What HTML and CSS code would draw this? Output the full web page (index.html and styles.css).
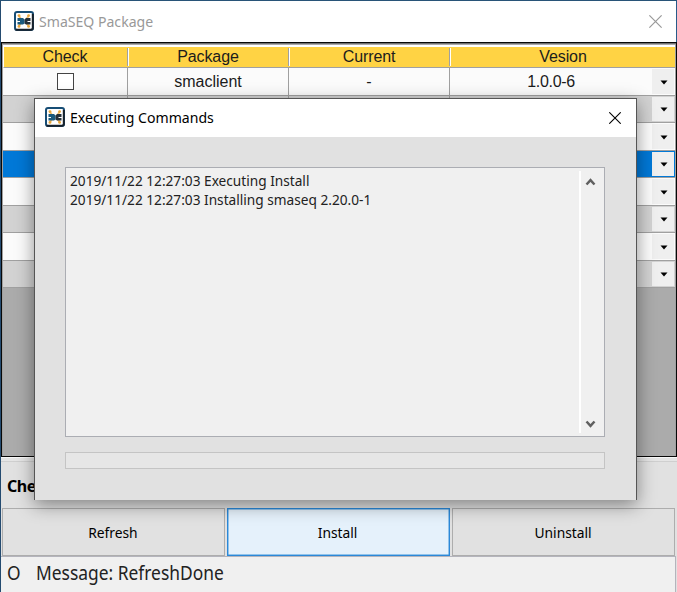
FILE: index.html
```html
<!DOCTYPE html>
<html lang="en">
<head>
<meta charset="utf-8">
<title>SmaSEQ Package</title>
<link rel="stylesheet" href="styles.css">
</head>
<body>
<svg class="defs" aria-hidden="true">
  <symbol id="logo" viewBox="0 0 20 20">
    <rect x="1" y="1" width="18" height="18" rx="2" fill="#fff" stroke="#174d75" stroke-width="2"/>
    <path d="M1.5 18.8H17a1.8 1.8 0 0 0 1.8-1.8V3" fill="none" stroke="#18212a" stroke-width="2"/>
    <path d="M5 5l2 3M14.5 5l-2 3M5 15l2-3M14.5 15l-2-3" stroke="#f0bd6a" stroke-width="2"/>
    <circle cx="5" cy="4.6" r="1.4" fill="#e9a63a"/><circle cx="14.6" cy="4.6" r="1.4" fill="#e9a63a"/>
    <circle cx="5" cy="15.4" r="1.4" fill="#e9a63a"/><circle cx="14.6" cy="15.4" r="1.4" fill="#e9a63a"/>
    <path d="M3.5 7H9l1.500 1.500v4L9 13.500H3.500v-2.500H6v-1H3.500z" fill="#1b5a7d"/>
    <path d="M16.500 7H12l-1.500 1.500v4l1.500 1H16.500V11H13.500v-1h3z" fill="#26313a"/>
  </symbol>
  <symbol id="close" viewBox="0 0 12 12"><path d="M.3.3l11.4 11.4M11.7.3L.3 11.7" fill="none" stroke="currentColor" stroke-width="1.1"/></symbol>
  <symbol id="arrow" viewBox="0 0 8 5"><path d="M.5.5h7L4 4.5z" fill="#000"/></symbol>
  <symbol id="chevron" viewBox="0 0 10 8"><path d="M1 6.5l4-4.3 4 4.3" fill="none" stroke="#606060" stroke-width="2.5"/></symbol>
</svg>
<div class="window">
  <header class="titlebar">
    <svg class="logo"><use href="#logo"/></svg>
    <h1 class="title">SmaSEQ Package</h1>
    <svg class="close"><use href="#close"/></svg>
  </header>
  <main class="grid">
    <div class="row head"><div>Check</div><div>Package</div><div>Current</div><div>Vesion</div></div>
    <div class="row"><div><i class="checkbox"></i></div><div>smaclient</div><div>-</div><div class="version">1.0.0-6</div><b class="drop"><svg><use href="#arrow"/></svg></b></div>
    <div class="row alt"><div></div><div></div><div></div><div></div><b class="drop"><svg><use href="#arrow"/></svg></b></div>
    <div class="row"><div></div><div></div><div></div><div></div><b class="drop"><svg><use href="#arrow"/></svg></b></div>
    <div class="row selected"><div></div><div></div><div></div><div></div><b class="drop"><svg><use href="#arrow"/></svg></b></div>
    <div class="row"><div></div><div></div><div></div><div></div><b class="drop"><svg><use href="#arrow"/></svg></b></div>
    <div class="row alt"><div></div><div></div><div></div><div></div><b class="drop"><svg><use href="#arrow"/></svg></b></div>
    <div class="row"><div></div><div></div><div></div><div></div><b class="drop"><svg><use href="#arrow"/></svg></b></div>
    <div class="row alt"><div></div><div></div><div></div><div></div><b class="drop"><svg><use href="#arrow"/></svg></b></div>
  </main>
  <div class="check-label">Che</div>
  <div class="actions">
    <button><span>Refresh</span></button>
    <button class="active"><span>Install</span></button>
    <button><span>Uninstall</span></button>
  </div>
  <footer class="status"><span class="state">O</span><span class="message">Message: RefreshDone</span></footer>
</div>
<section class="dialog">
  <header class="dialog-title">
    <svg class="logo"><use href="#logo"/></svg>
    <h2 class="title">Executing Commands</h2>
    <svg class="close"><use href="#close"/></svg>
  </header>
  <div class="dialog-body">
    <div class="log">
      <div class="lines"><p>2019/11/22 12:27:03 Executing Install</p><p>2019/11/22 12:27:03 Installing smaseq 2.20.0-1</p></div>
      <div class="scroll"><svg><use href="#chevron"/></svg><svg class="down"><use href="#chevron"/></svg></div>
    </div>
    <div class="progress"></div>
  </div>
</section>
</body>
</html>
```
FILE: styles.css
```css
* { box-sizing: border-box; }
body { margin: 0; width: 677px; height: 592px; overflow: hidden; position: relative; font-family: "Noto Sans", sans-serif; color: #000; }
h1, h2, p { margin: 0; font-weight: 400; }
svg { display: block; }
.defs { display: none; }
.window { height: 592px; display: flex; flex-direction: column; background: #e1e1e1; border-left: 1px solid #244b70; border-top: 1px solid #285478; }
.titlebar { height: 41px; flex: none; display: flex; align-items: center; padding: 0 16px 0 13px; background: #fff; color: #999; border-right: 1px solid #285b8a; }
.titlebar .logo { margin-top: -1px; }
.logo { width: 20px; height: 20px; margin-right: 5px; flex: none; }
.title { font-size: 15px; line-height: 22px; white-space: nowrap; transform-origin: left; transform: scaleX(.938); margin-top: -2px; }
.close { width: 12px; height: 12px; margin-left: auto; flex: none; }
.titlebar .close { width: 13px; height: 13px; margin-right: -2px; margin-top: -1px; }

.grid { height: 415px; flex: none; background: #ababab; border: 1px solid #080808; padding: 2px 1px 0; font: 16px "Liberation Sans", sans-serif; color: #1c1c1c; box-shadow: inset 0 1px #707070, inset 1px 0 #a0a0a0, inset -1px 0 #a0a0a0; }
.row { display: grid; grid-template-columns: 125px 161px 161px 1fr 24px; height: 27.5px; background: #fbfbfb; border-bottom: 1.5px solid #a0a0a0; }
.row > div { display: flex; align-items: center; justify-content: center; border-right: 1px solid #a0a0a0; padding-top: 2px; }
.row > div:nth-child(4) { border-right: 0; }
.row > div:first-child { padding-top: 0; }
.head { grid-template-columns: 125px 161px 161px 1fr; height: 23px; background: #ffd344; border-top: 2px solid #fff; border-left: 1px solid #fff; border-bottom: 1px solid #a0a0a0; letter-spacing: -.1px; }
.head > div, .head > div:first-child { padding-top: 0; }
.head > div:not(:last-child) { position: relative; left: -1px; box-shadow: 1px 0 #fff; margin-top: 1px; margin-bottom: 1px; }
.row .version { padding-left: 1px; letter-spacing: -.3px; }
.alt { background: #d2d2d2; }
.selected { background: #0078d7; }
.selected .drop { outline: 1px solid #0078d7; }
.drop { background: #efefef; margin: 1px; display: flex; align-items: center; justify-content: center; padding-left: 2px; }
.drop svg { width: 8px; height: 5px; margin-top: 2px; }
.checkbox { width: 17px; height: 17px; border: 1px solid #444; background: #fff; }

.check-label { height: 51px; flex: none; padding: 18px 6px 0; border-top: 1px solid #f8f8f8; box-shadow: inset 0 3px #e5e5e5, inset 0 4px #cfcfcf; font-size: 16px; line-height: 20px; font-weight: 700; letter-spacing: -.4px; }
.actions { display: grid; grid-template-columns: repeat(3, 223px); gap: 2px; height: 48px; flex: none; padding-left: 1px; }
button { font: 15px "Noto Sans", sans-serif; color: #000; border: 1px solid #adadad; background: #e1e1e1; padding: 0 1px 1px 0; }
button span { display: inline-block; transform: scaleX(.92); }
.active { background: #e5f1fb; border: 1px solid #2b88d8; box-shadow: inset 0 0 0 .5px #3e96dc; }
.status { flex: 1; display: flex; align-items: flex-start; padding: 3px 6px; background: #f0f0f0; border: 1px solid #b4b4bc; border-width: 1px 1px 0 0; margin-right: 1px; font-size: 19px; line-height: 26px; color: #222; }
.status span { transform: scaleX(.915); transform-origin: left; white-space: nowrap; }
.state { width: 29px; }

.dialog { position: absolute; left: 34px; top: 98px; width: 603px; height: 402px; border: 1px solid #555; border-bottom: 0; background: #e1e1e1; box-shadow: 0 5px 17px rgba(0,0,0,.42); }
.dialog-title { height: 38px; display: flex; align-items: center; background: #fff; padding: 0 15px 0 10px; }
.dialog-title .logo { margin-top: -2px; }
.dialog-body { padding: 30px 31px 0 30px; }
.log { height: 270px; display: flex; border: 1px solid #abadb3; background: #f0f0f0; }
.lines { flex: 1; padding: 3px 4px; font-size: 15px; line-height: 18.5px; white-space: nowrap; color: #222; transform: scaleX(.911); transform-origin: 4px 0; }
.scroll { width: 25px; margin: 3px 0; border-left: 2px solid #fff; display: flex; flex-direction: column; justify-content: space-between; align-items: center; padding: 7px 5px 5px 0; }
.scroll svg { width: 11px; height: 8px; }
.down { transform: rotate(180deg); }
.progress { height: 17px; margin-top: 15px; border: 1px solid #c4c4c4; background: #e6e6e6; }
```
